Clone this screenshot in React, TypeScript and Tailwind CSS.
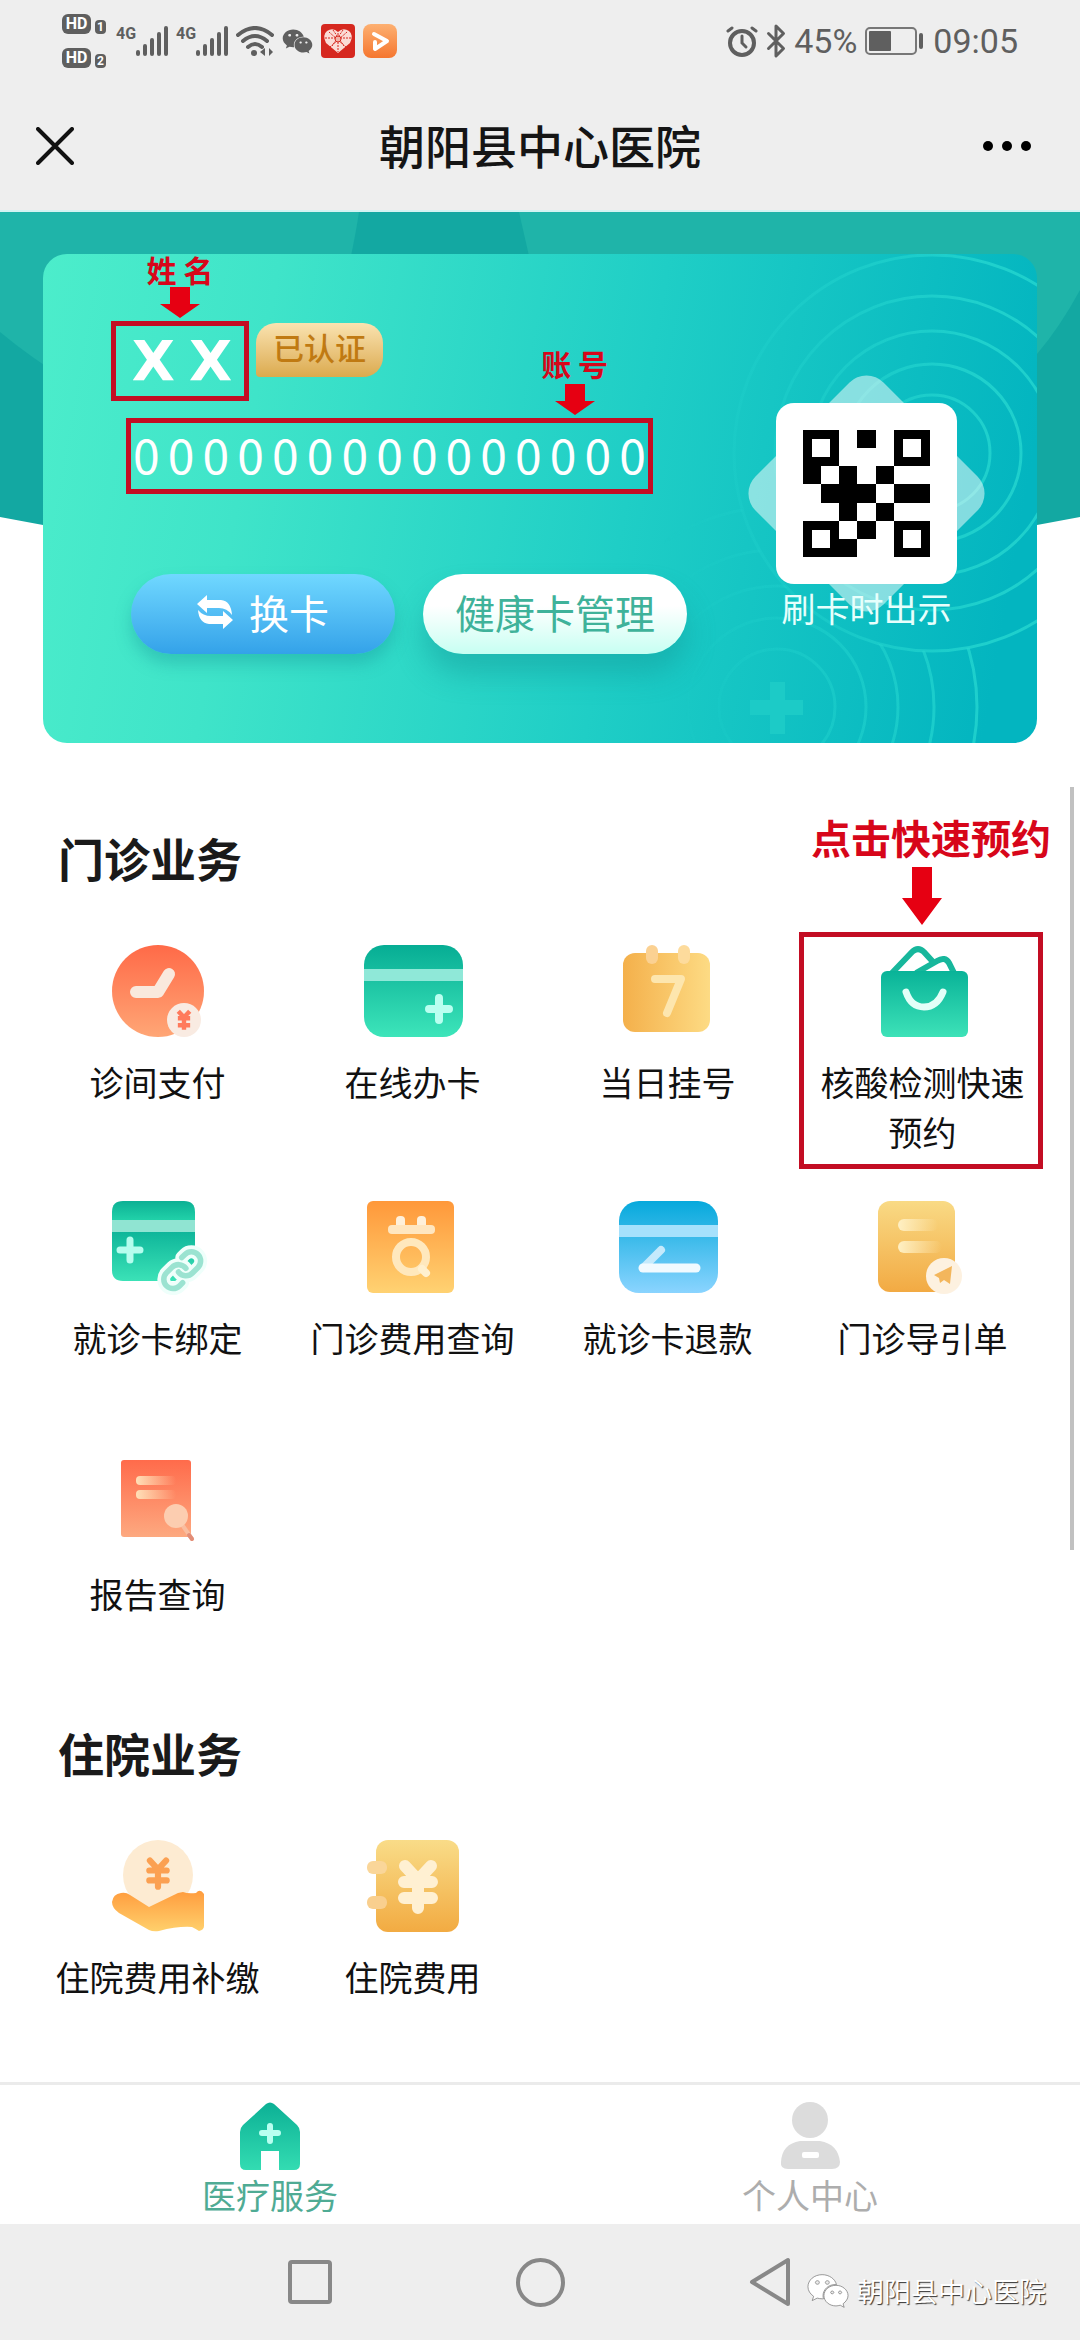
import React from 'react';
import { Bluetooth } from 'lucide-react';
import { FaWeixin } from 'react-icons/fa';

type IconProps = { children: React.ReactNode };

// 所有业务图标共用 92x92 画布
const IconBox: React.FC<IconProps> = ({ children }) => (
  <svg viewBox="0 0 92 92" className="w-[92px] h-[92px] overflow-visible" fill="none" aria-hidden="true">
    {children}
  </svg>
);

const Gradient: React.FC<{ id: string; from: string; to: string; horizontal?: boolean; fade?: boolean }> = ({ id, from, to, horizontal, fade }) => (
  <linearGradient id={id} x1="0" y1="0" x2={horizontal ? '1' : '0'} y2={horizontal ? '0' : '1'}>
    <stop offset="0" stopColor={from} />
    <stop offset="1" stopColor={to} stopOpacity={fade ? 0 : 1} />
  </linearGradient>
);

const YEN = 'M-13 -20L0 -6L13 -20M0 -6V22M-14 -4H14M-14 12H14';

const PayIcon = () => (
  <IconBox>
    <defs><Gradient id="pay" from="#ff6a48" to="#ffa676" /></defs>
    <circle cx="46" cy="46" r="46" fill="url(#pay)" />
    <path d="M24 47H46L57 29" stroke="#f9e9dd" strokeWidth="12" strokeLinecap="round" strokeLinejoin="round" />
    <circle cx="72" cy="75" r="17" fill="#f9ebe2" />
    <path d={YEN} transform="translate(72 75) scale(.44)" stroke="#ff7a5c" strokeWidth="10" />
  </IconBox>
);

const CardAddIcon = () => (
  <IconBox>
    <defs><Gradient id="cardAdd" from="#06ad94" to="#3de5ba" /></defs>
    <rect x="-3" width="99" height="92" rx="20" fill="url(#cardAdd)" />
    <rect x="-3" y="24" width="99" height="12" fill="#8fe8d8" />
    <path d="M72 53V75M62 64H82" stroke="#bafff0" strokeWidth="8" strokeLinecap="round" />
  </IconBox>
);

const CalendarIcon = () => (
  <IconBox>
    <defs><Gradient id="calendar" from="#f4b04b" to="#fddb84" horizontal /></defs>
    <rect x="1" y="8" width="87" height="79" rx="12" fill="url(#calendar)" />
    <rect x="24" width="12" height="19" rx="6" fill="#fbd192" />
    <rect x="56" width="12" height="19" rx="6" fill="#fddb9c" />
    <path d="M33 34H59L45 68" stroke="#fde6ae" strokeWidth="8" strokeLinecap="round" strokeLinejoin="round" />
  </IconBox>
);

const BagIcon = () => (
  <IconBox>
    <defs><Gradient id="bag" from="#09b398" to="#3de2b8" /></defs>
    <path d="M15 28L35 7Q41 1 47 7L57 18" stroke="#17b79c" strokeWidth="6" />
    <path d="M39 28L60 16Q68 11 72 18L77 28" stroke="#17b79c" strokeWidth="6" />
    <rect x="4" y="26" width="87" height="66" rx="6" fill="url(#bag)" />
    <path d="M29 47Q34 62 47 62Q60 62 66 47" stroke="#e3fff8" strokeWidth="7" strokeLinecap="round" />
  </IconBox>
);

const LINK_A = 'M10 13a5 5 0 0 0 7.54.54l3-3a5 5 0 0 0-7.07-7.07l-1.72 1.71';
const LINK_B = 'M14 11a5 5 0 0 0-7.54-.54l-3 3a5 5 0 0 0 7.07 7.07l1.71-1.71';

const CardBindIcon = () => (
  <IconBox>
    <defs>
      <Gradient id="bindTop" from="#0cb094" to="#22d3aa" />
      <Gradient id="bindBody" from="#0fb69a" to="#3be2b7" />
    </defs>
    <path d="M0 20V11Q0 0 11 0H72Q83 0 83 11V20Z" fill="url(#bindTop)" />
    <path d="M0 31H83V69Q83 80 72 80H11Q0 80 0 69Z" fill="url(#bindBody)" />
    <rect y="19" width="83" height="12" fill="#90e4d2" />
    <path d="M18 39V59M8 49H28" stroke="#b5fdee" strokeWidth="7" strokeLinecap="round" />
    <g transform="translate(48 47) scale(1.85)" strokeLinecap="round" strokeLinejoin="round">
      <path d={LINK_A} stroke="#effffb" strokeWidth="7" />
      <path d={LINK_B} stroke="#effffb" strokeWidth="7" />
      <path d={LINK_A} stroke="#9be3d1" strokeWidth="3" />
      <path d={LINK_B} stroke="#9be3d1" strokeWidth="3" />
    </g>
  </IconBox>
);

const FeeQueryIcon = () => (
  <IconBox>
    <defs><Gradient id="feeQuery" from="#ff983a" to="#ffd272" /></defs>
    <rect width="87" height="92" rx="6" fill="url(#feeQuery)" />
    <rect x="29" y="15" width="9" height="14" rx="4" fill="#fff0da" />
    <rect x="50" y="15" width="9" height="14" rx="4" fill="#fff0da" />
    <rect x="21" y="24" width="47" height="9" rx="4" fill="#ffe6c0" />
    <circle cx="44" cy="56" r="15" stroke="#ffe8bd" strokeWidth="8" />
    <path d="M55 68L59 72" stroke="#fff0cf" strokeWidth="8" strokeLinecap="round" />
  </IconBox>
);

const RefundIcon = () => (
  <IconBox>
    <defs>
      <Gradient id="refund" from="#06a9dc" to="#8ad4ff" />
    </defs>
    <rect x="-3" width="99" height="92" rx="20" fill="url(#refund)" />
    <rect x="-3" y="24" width="99" height="12" fill="#a6e1fc" />
    <path d="M39 49L21 67" stroke="#c5eafc" strokeWidth="8" strokeLinecap="round" />
    <path d="M21 67H74" stroke="#f1faff" strokeWidth="9" strokeLinecap="round" />
  </IconBox>
);

const GuideIcon = () => (
  <IconBox>
    <defs>
      <Gradient id="guide" from="#f9da85" to="#f2aa43" />
      <Gradient id="guideLine" from="#fff0c4" to="#fff0c4" horizontal fade />
    </defs>
    <rect x="1" width="77" height="91" rx="12" fill="url(#guide)" />
    <rect x="21" y="18" width="40" height="12" rx="6" fill="url(#guideLine)" />
    <rect x="21" y="40" width="44" height="12" rx="6" fill="url(#guideLine)" />
    <circle cx="67" cy="75" r="18" fill="#fdf1e0" />
    <path d="M75 65L57 74L62 77L63 82L67 79L73 83Z" fill="#f3b65c" />
  </IconBox>
);

const ReportIcon = () => (
  <IconBox>
    <defs>
      <Gradient id="report" from="#ff6b4b" to="#fda980" />
      <Gradient id="reportLine" from="#ffe0b8" to="#ffe0b8" horizontal fade />
    </defs>
    <rect x="9" y="3" width="70" height="77" rx="3" fill="url(#report)" />
    <rect x="24" y="19" width="40" height="9" rx="4" fill="url(#reportLine)" />
    <rect x="24" y="33" width="40" height="9" rx="4" fill="url(#reportLine)" />
    <path d="M71 69L80 82" stroke="#f9bd9f" strokeWidth="4" strokeLinecap="round" />
    <path d="M77 78L80 82" stroke="#e28d78" strokeWidth="4" strokeLinecap="round" />
    <circle cx="64" cy="59" r="12" fill="#fccdb0" />
  </IconBox>
);

const HandPayIcon = () => (
  <IconBox>
    <defs><Gradient id="hand" from="#ff9c3e" to="#ffd06c" /></defs>
    <circle cx="46" cy="35" r="35" fill="#fdebd2" />
    <path d={YEN} transform="translate(46 33) scale(.62)" stroke="#fba052" strokeWidth="10" strokeLinecap="round" />
    <path d="M9 53Q1 54 0 62Q0 68 7 73L37 90Q41 92 47 91Q66 86 80 87Q84 89 87 91Q92 90 92 86V54Q88 48 84 53Q76 54 71 52L66 53L37 67L18 55Q14 52 9 53Z" fill="url(#hand)" />
  </IconBox>
);

const LedgerIcon = () => (
  <IconBox>
    <defs><Gradient id="ledger" from="#f9dc88" to="#f2ab42" /></defs>
    <rect x="9" width="83" height="92" rx="12" fill="url(#ledger)" />
    <rect y="21" width="20" height="13" rx="6" fill="#fad699" />
    <rect y="56" width="20" height="13" rx="6" fill="#f9cf8e" />
    <path d={YEN} transform="translate(51 46)" stroke="#fff0d2" strokeWidth="12" strokeLinecap="round" />
  </IconBox>
);

const OUTPATIENT = [
  { name: '诊间支付', icon: <PayIcon /> },
  { name: '在线办卡', icon: <CardAddIcon /> },
  { name: '当日挂号', icon: <CalendarIcon /> },
  { name: '核酸检测快速预约', icon: <BagIcon />, tip: '点击快速预约' },
  { name: '就诊卡绑定', icon: <CardBindIcon /> },
  { name: '门诊费用查询', icon: <FeeQueryIcon /> },
  { name: '就诊卡退款', icon: <RefundIcon /> },
  { name: '门诊导引单', icon: <GuideIcon /> },
  { name: '报告查询', icon: <ReportIcon /> },
];

const INPATIENT = [
  { name: '住院费用补缴', icon: <HandPayIcon /> },
  { name: '住院费用', icon: <LedgerIcon /> },
];

const CARD_NO = '000000000000000';

const SmallArrow = () => (
  <svg viewBox="0 0 40 31" className="w-10 h-[31px]" aria-hidden="true">
    <path d="M10 0H30V17H40L20 31L0 17H10Z" fill="#e60012" />
  </svg>
);

const Signal = () => (
  <div className="flex items-start">
    <span className="text-base leading-none font-bold">4G</span>
    <svg viewBox="0 0 32 30" className="w-8 h-[30px]" stroke="#5f5f5f" strokeWidth="4" strokeLinecap="round" aria-hidden="true">
      <path d="M2 26V28M9 20V28M16 14V28M23 8V28M30 2V28" />
    </svg>
  </div>
);

const HdBadge: React.FC<{ slot: string }> = ({ slot }) => (
  <div className="flex items-end gap-1">
    <span className="w-[29px] h-5 rounded-md bg-[#5f5f5f] text-white text-base leading-5 font-bold text-center">HD</span>
    <span className="w-[11px] h-3.5 rounded-sm bg-[#5f5f5f] text-white text-xs leading-3.5 font-bold text-center">{slot}</span>
  </div>
);

const StatusBar = () => (
  <div className="flex items-center justify-between h-[82px] px-[62px] text-[#5f5f5f] font-[Roboto,sans-serif]">
    <div className="flex items-center gap-2">
      <div className="flex flex-col gap-3.5 mr-0.5">
        <HdBadge slot="1" />
        <HdBadge slot="2" />
      </div>
      <Signal />
      <Signal />
      <svg viewBox="0 0 38 30" className="w-[38px] h-[30px]" fill="none" stroke="#5f5f5f" strokeWidth="4" strokeLinecap="round" aria-hidden="true">
        <path d="M2 9Q19 -5 36 9M7 15Q19 5 31 15M12 21Q19 15 26 21" />
        <circle cx="18" cy="27" r="3" fill="#5f5f5f" stroke="none" />
        <path d="M29 22V30L24 26ZM33 22V30L37 26Z" fill="#5f5f5f" stroke="none" />
      </svg>
      <FaWeixin className="w-[31px] h-[31px]" />
      <svg viewBox="0 0 34 34" className="w-[34px] h-[34px]" aria-hidden="true">
        <rect width="34" height="34" rx="4" fill="#d6281f" />
        <path d="M17 29L5 19Q1 11 6 7Q12 3 17 8Q22 3 28 7Q33 11 29 19Z" fill="#fbdcd6" />
        <path d="M8 8L26 24M26 8L8 24M17 9V28M4 14H30M12 6L23 22M22 6L11 22" stroke="#d6281f" strokeWidth="1" strokeDasharray="2 1" />
        <circle cx="17" cy="15" r="3" fill="#f3b3a8" stroke="#d6281f" />
      </svg>
      <svg viewBox="0 0 34 34" className="w-[34px] h-[34px]" fill="none" aria-hidden="true">
        <defs><Gradient id="player" from="#fdb071" to="#f5762f" /></defs>
        <rect width="34" height="34" rx="8" fill="url(#player)" />
        <path d="M11 10L24 17L12 25V18" stroke="#fff" strokeWidth="4" strokeLinecap="round" strokeLinejoin="round" />
      </svg>
    </div>
    <div className="flex items-center gap-2">
      <svg viewBox="0 0 32 32" className="w-8 h-8" fill="none" stroke="#5f5f5f" strokeWidth="4" strokeLinecap="round" aria-hidden="true">
        <circle cx="16" cy="18" r="12" />
        <path d="M16 11V18L20 22" strokeWidth="3" />
        <path d="M2 6L6 3M30 6L26 3" strokeWidth="3" />
      </svg>
      <Bluetooth className="w-9 h-9 -mx-2" strokeWidth={2} aria-hidden="true" />
      <span className="text-[34px] leading-10">45%</span>
      <svg viewBox="0 0 60 28" className="w-[60px] h-7" fill="none" aria-hidden="true">
        <rect x="1" y="1" width="50" height="26" rx="4" stroke="#777" strokeWidth="2" />
        <rect x="4" y="4" width="22" height="20" rx="1" fill="#5f5f5f" />
        <rect x="54" y="6" width="4" height="16" rx="2" fill="#5f5f5f" />
      </svg>
      <span className="text-[34px] leading-10">09:05</span>
    </div>
  </div>
);

const TitleBar = () => (
  <header className="grid grid-cols-[1fr_auto_1fr] items-center h-32 px-[36px]">
    <button type="button" aria-label="关闭" className="justify-self-start">
      <svg viewBox="0 0 38 38" className="w-[38px] h-[38px]" stroke="#111" strokeWidth="4" strokeLinecap="round" aria-hidden="true">
        <path d="M2 2L36 36M36 2L2 36" />
      </svg>
    </button>
    <h1 className="pb-1 text-[46px] leading-[64px] font-medium text-[#151515]">朝阳县中心医院</h1>
    <button type="button" aria-label="更多" className="justify-self-end pr-3">
      <svg viewBox="0 0 50 12" className="w-[50px] h-3" aria-hidden="true">
        <circle cx="6" cy="6" r="5" />
        <circle cx="25" cy="6" r="5" />
        <circle cx="44" cy="6" r="5" />
      </svg>
    </button>
  </header>
);

const QrCode = () => (
  <svg viewBox="0 0 14 14" className="w-[127px] h-[127px]" shapeRendering="crispEdges" role="img" aria-label="就诊二维码">
    <path d="M0 0H4V4H0ZM10 0H14V4H10ZM0 10H4V14H0ZM10 10H14V14H10ZM6 0H8V2H6ZM0 4H2V6H0ZM4 4H6V6H4ZM8 4H10V6H8ZM2 6H8V8H2ZM10 6H14V8H10ZM4 8H6V10H4ZM8 8H10V10H8ZM6 10H8V12H6ZM4 12H6V14H4Z" />
    <path d="M1 1H3V3H1ZM11 1H13V3H11ZM1 11H3V13H1ZM11 11H13V13H11Z" fill="#fff" />
  </svg>
);

// 卡片右侧的同心圆底纹
const CardPattern = () => (
  <svg viewBox="0 0 994 489" preserveAspectRatio="xMaxYMid slice" className="absolute inset-0 w-full h-full rounded-[24px]" fill="none" aria-hidden="true">
    <defs>
      <linearGradient id="ring" gradientUnits="userSpaceOnUse" x1="620" y1="0" x2="940" y2="0">
        <stop offset="0" stopColor="#25d6d0" stopOpacity="0" />
        <stop offset="1" stopColor="#25d6d0" stopOpacity=".8" />
      </linearGradient>
      <mask id="outside">
        <rect width="994" height="489" fill="#fff" />
        <circle cx="889" cy="199" r="198" fill="#000" />
      </mask>
    </defs>
    <g stroke="url(#ring)" strokeWidth="3">
      {[198, 157, 122, 89, 58].map((r) => <circle key={r} cx="889" cy="199" r={r} />)}
      <g mask="url(#outside)">
        {[58, 89, 121, 157, 200].map((r) => <circle key={r} cx="734" cy="453" r={r} />)}
      </g>
    </g>
    <path d="M727 428H742V446H760V461H742V480H727V461H707V446H727Z" fill="#1ccbc7" />
  </svg>
);

const HealthCard = () => (
  <section className="relative px-[43px] pt-[42px]">
    <svg viewBox="0 0 1080 360" preserveAspectRatio="none" className="absolute inset-x-0 top-0 w-full h-[360px]" aria-hidden="true">
      <path d="M0 0H1080V305L1037 313Q540 390 43 313L0 305Z" fill="#13a8a2" />
      <path d="M0 0H359Q350 60 320 170H70Q30 145 0 120Z" fill="#1fb4a9" />
      <path d="M519 0H1080V78Q1060 115 1037 142L960 180H560Z" fill="#1fb4a9" />
    </svg>
    <div className="relative flex justify-between pl-[68px] pr-20 pt-[67px] pb-[89px] rounded-[24px] bg-[linear-gradient(100deg,#4cedcb_0%,#3fe4c9_22%,#1fcec6_58%,#03b5c0_95%)]">
      <CardPattern />
      <div className="relative">
        <div className="flex items-start gap-[7px]">
          <div className="relative flex items-center justify-center gap-3.5 w-[138px] h-20 pl-1 border-5 border-[#c30d23] text-white text-[56px] leading-none font-bold font-['DejaVu_Sans',sans-serif]">
            <span>X</span>
            <span>X</span>
            <div className="absolute bottom-full inset-x-0 mb-2 flex flex-col items-center font-['Noto_Sans_CJK_SC',sans-serif]">
              <span className="text-[30px] leading-9 text-[#d7061a] whitespace-nowrap">姓 名</span>
              <SmallArrow />
            </div>
          </div>
          <span className="mt-0.5 w-[127px] h-[54px] rounded-[20px] rounded-bl-sm bg-linear-to-b from-[#fae3b0] to-[#dbaa4c] text-[#c07a12] text-[31px] leading-[48px] font-medium text-center">已认证</span>
        </div>
        <div className="relative flex items-center justify-between ml-[15px] mt-[17px] w-[527px] h-[76px] px-0.5 pb-1.5 border-5 border-[#c30d23] text-white text-[48px] leading-none">
          {CARD_NO.split('').map((n, i) => <span key={i}>{n}</span>)}
          <div className="absolute bottom-full right-10 mb-2 flex flex-col items-center gap-[3px] font-bold">
            <span className="text-[30px] leading-9 text-[#d7061a] whitespace-nowrap">账 号</span>
            <SmallArrow />
          </div>
        </div>
        <div className="flex gap-7 ml-5 mt-20 text-[40px] leading-[56px]">
          <button type="button" className="flex items-center justify-center gap-4 w-[264px] h-20 pb-1 rounded-full bg-linear-to-b from-[#70d8ff] to-[#33a2e9] text-white shadow-[0_10px_16px_rgba(20,140,150,0.35)]">
            <svg viewBox="0 0 36 34" className="w-9 h-[34px]" fill="currentColor" aria-hidden="true">
              <path d="M0 9L10 0V5H24Q34 6 35 20Q30 13 22 13H10V18Z" />
              <path d="M36 25L26 34V29H12Q2 28 1 15Q6 21 14 21H26V16Z" />
            </svg>
            换卡
          </button>
          <button type="button" className="w-[264px] h-20 pb-1 rounded-full bg-linear-to-b from-white from-40% to-[#c6fff2] text-[#3fb29a] shadow-[0_20px_28px_rgba(20,150,150,0.45)]">健康卡管理</button>
        </div>
      </div>
      <div className="relative flex flex-col items-center w-[181px] pt-[82px]">
        <div className="relative w-[181px] h-[181px]">
          <div className="absolute inset-0 rotate-45 rounded-[24px] bg-white/50" />
          <div className="relative flex items-center justify-center w-full h-full rounded-[18px] bg-white">
            <QrCode />
          </div>
        </div>
        <p className="relative mt-1 text-[34px] leading-10 text-[#e6fffc]">刷卡时出示</p>
      </div>
    </div>
  </section>
);

type Service = { name: string; icon: React.ReactNode; tip?: string };

const ServiceSection: React.FC<{ title: string; items: Service[] }> = ({ title, items }) => (
  <section className="px-[30px]">
    <h2 className="pl-[28px] mb-[56px] text-[46px] leading-[64px] font-bold text-[#1a1a1a]">{title}</h2>
    <div className="grid grid-cols-4 auto-rows-[214px] gap-y-[42px]">
      {items.map((item) => (
        <a key={item.name} href="#" className="relative flex flex-col items-center gap-5">
          {item.icon}
          <span className="px-5 text-[34px] leading-[50px] text-[#111] text-center">{item.name}</span>
          {item.tip && (
            <span className="absolute -top-[13px] -bottom-[10px] left-1 right-[7px] border-5 border-[#c30d23]">
              <span className="absolute bottom-full -right-[13px] mb-3 flex flex-col items-center gap-2">
                <span className="text-[40px] leading-[44px] font-bold text-[#d7061a] whitespace-nowrap">{item.tip}</span>
                <svg viewBox="0 0 40 58" className="w-10 h-[58px] mr-[18px]" aria-hidden="true">
                  <path d="M10 0H30V31H40L20 58L0 31H10Z" fill="#e60012" />
                </svg>
              </span>
            </span>
          )}
        </a>
      ))}
    </div>
  </section>
);

const TabBar = () => (
  <nav className="grid grid-cols-2 h-[142px] border-t-3 border-[#ebebeb] bg-white text-[34px] leading-[50px]">
    <a href="#" className="flex flex-col items-center pt-[17px] text-[#4fab94]">
      <svg viewBox="0 0 60 68" className="w-[60px] h-[68px]" fill="none" aria-hidden="true">
        <defs><Gradient id="home" from="#0cb095" to="#33dcb2" /></defs>
        <path d="M26 2Q30 -1 34 2L57 23Q60 26 60 30V62Q60 68 54 68H39V49H21V68H6Q0 68 0 62V30Q0 26 3 23Z" fill="url(#home)" />
        <path d="M30 24V39M22 31H38" stroke="#b8fff0" strokeWidth="6" strokeLinecap="round" />
      </svg>
      医疗服务
    </a>
    <a href="#" className="flex flex-col items-center pt-[17px] text-[#adadad]">
      <svg viewBox="0 0 60 68" className="w-[60px] h-[68px]" aria-hidden="true">
        <circle cx="30" cy="18" r="18" fill="#dcdcdc" />
        <path d="M20 39H40Q58 42 60 60Q60 67 52 67H8Q0 67 1 60Q2 42 20 39Z" fill="#dcdcdc" />
        <rect x="22" y="50" width="17" height="6" rx="2" fill="#fff" />
      </svg>
      个人中心
    </a>
  </nav>
);

const SystemNav = () => (
  <div className="relative grid grid-cols-[230px_230px_230px] justify-center h-[116px] bg-[#eee]">
    <button type="button" aria-label="最近任务" className="flex items-center justify-center">
      <span className="w-11 h-11 rounded-sm border-4 border-[#888]" />
    </button>
    <button type="button" aria-label="主屏幕" className="flex items-center justify-center">
      <span className="w-[49px] h-[49px] rounded-full border-4 border-[#888]" />
    </button>
    <button type="button" aria-label="返回" className="flex items-center justify-center">
      <svg viewBox="0 0 42 50" className="w-[42px] h-[50px]" fill="none" stroke="#888" strokeWidth="4" strokeLinejoin="round" aria-hidden="true">
        <path d="M39 3V47L3 25Z" />
      </svg>
    </button>
    {/* 公众号水印 */}
    <div className="absolute right-[34px] top-[46px] flex items-center gap-2 text-white text-[27px] leading-10 [text-shadow:1px_1px_1px_#333]">
      <FaWeixin className="w-[42px] h-[42px] overflow-visible" stroke="#777" strokeWidth="10" />
      朝阳县中心医院
    </div>
  </div>
);

export default function App() {
  return (
    <div className="min-h-screen flex flex-col bg-white font-['Noto_Sans_CJK_SC',sans-serif]">
      <div className="bg-[#eee] border-b-2 border-[#d3f3f2]">
        <StatusBar />
        <TitleBar />
      </div>
      <main className="relative flex-1">
        <HealthCard />
        <div className="flex flex-col gap-[49px] pt-[82px]">
          <ServiceSection title="门诊业务" items={OUTPATIENT} />
          <ServiceSection title="住院业务" items={INPATIENT} />
        </div>
        <div className="absolute right-1.5 top-[575px] w-1 h-[763px] bg-[#c1c1c1]" />
      </main>
      <TabBar />
      <SystemNav />
    </div>
  );
}
